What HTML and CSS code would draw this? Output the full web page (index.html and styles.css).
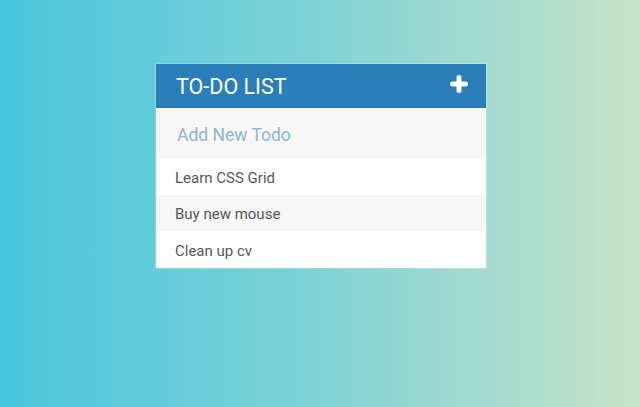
FILE: index.html
```html
<!DOCTYPE html>
<html lang="en">
<head>
<meta charset="utf-8">
<title>To-Do List</title>
<link rel="stylesheet" href="styles.css">
</head>
<body>
<div class="page">
  <div class="card">
    <div class="header">
      <h1 class="title">TO-DO LIST</h1>
      <svg class="plus" width="18" height="18" viewBox="0 0 18 18" aria-hidden="true">
        <path d="M9 2.5 V15.5 M2.5 9 H15.5" stroke="#fff" stroke-width="5" stroke-linecap="round" fill="none"/>
      </svg>
    </div>
    <div class="new-todo">Add New Todo</div>
    <ul class="items">
      <li class="item">Learn CSS Grid</li>
      <li class="item">Buy new mouse</li>
      <li class="item">Clean up cv</li>
    </ul>
  </div>
</div>
</body>
</html>
```
FILE: styles.css
```css
html, body {
  margin: 0;
  padding: 0;
  height: 100%;
}
body {
  background: linear-gradient(to right, #48c6dd 0%, #7fd2d5 50%, #c7e4c9 100%);
  font-family: Roboto, "Open Sans", sans-serif;
}
.page {
  display: flex;
  justify-content: flex-start;
  padding: 64px 0 0 156px;
}
.card {
  width: 330px;
  background: #fff;
  box-shadow: 0 0 2px rgba(255, 255, 255, 0.6);
}
.header {
  height: 44px;
  background: #2a7fba;
  display: flex;
  align-items: center;
  justify-content: space-between;
  padding: 0 18px 0 20px;
}
.title {
  margin: 0;
  font-size: 21.5px;
  font-weight: 400;
  color: #fff;
  letter-spacing: 0;
}
.plus {
  display: block;
  margin-top: -5px;
}
.new-todo {
  height: 50px;
  box-sizing: border-box;
  padding: 3px 0 0 21px;
  background: #f7f7f7;
  color: #8fb6d2;
  font-size: 17.5px;
  display: flex;
  align-items: center;
}
.items {
  list-style: none;
  margin: 0;
  padding: 0;
}
.item {
  height: 36.5px;
  box-sizing: border-box;
  padding: 3px 0 0 19px;
  display: flex;
  align-items: center;
  font-size: 15px;
  color: #585858;
  background: #fff;
}
.item:nth-child(even) {
  background: #f7f7f7;
}
```
